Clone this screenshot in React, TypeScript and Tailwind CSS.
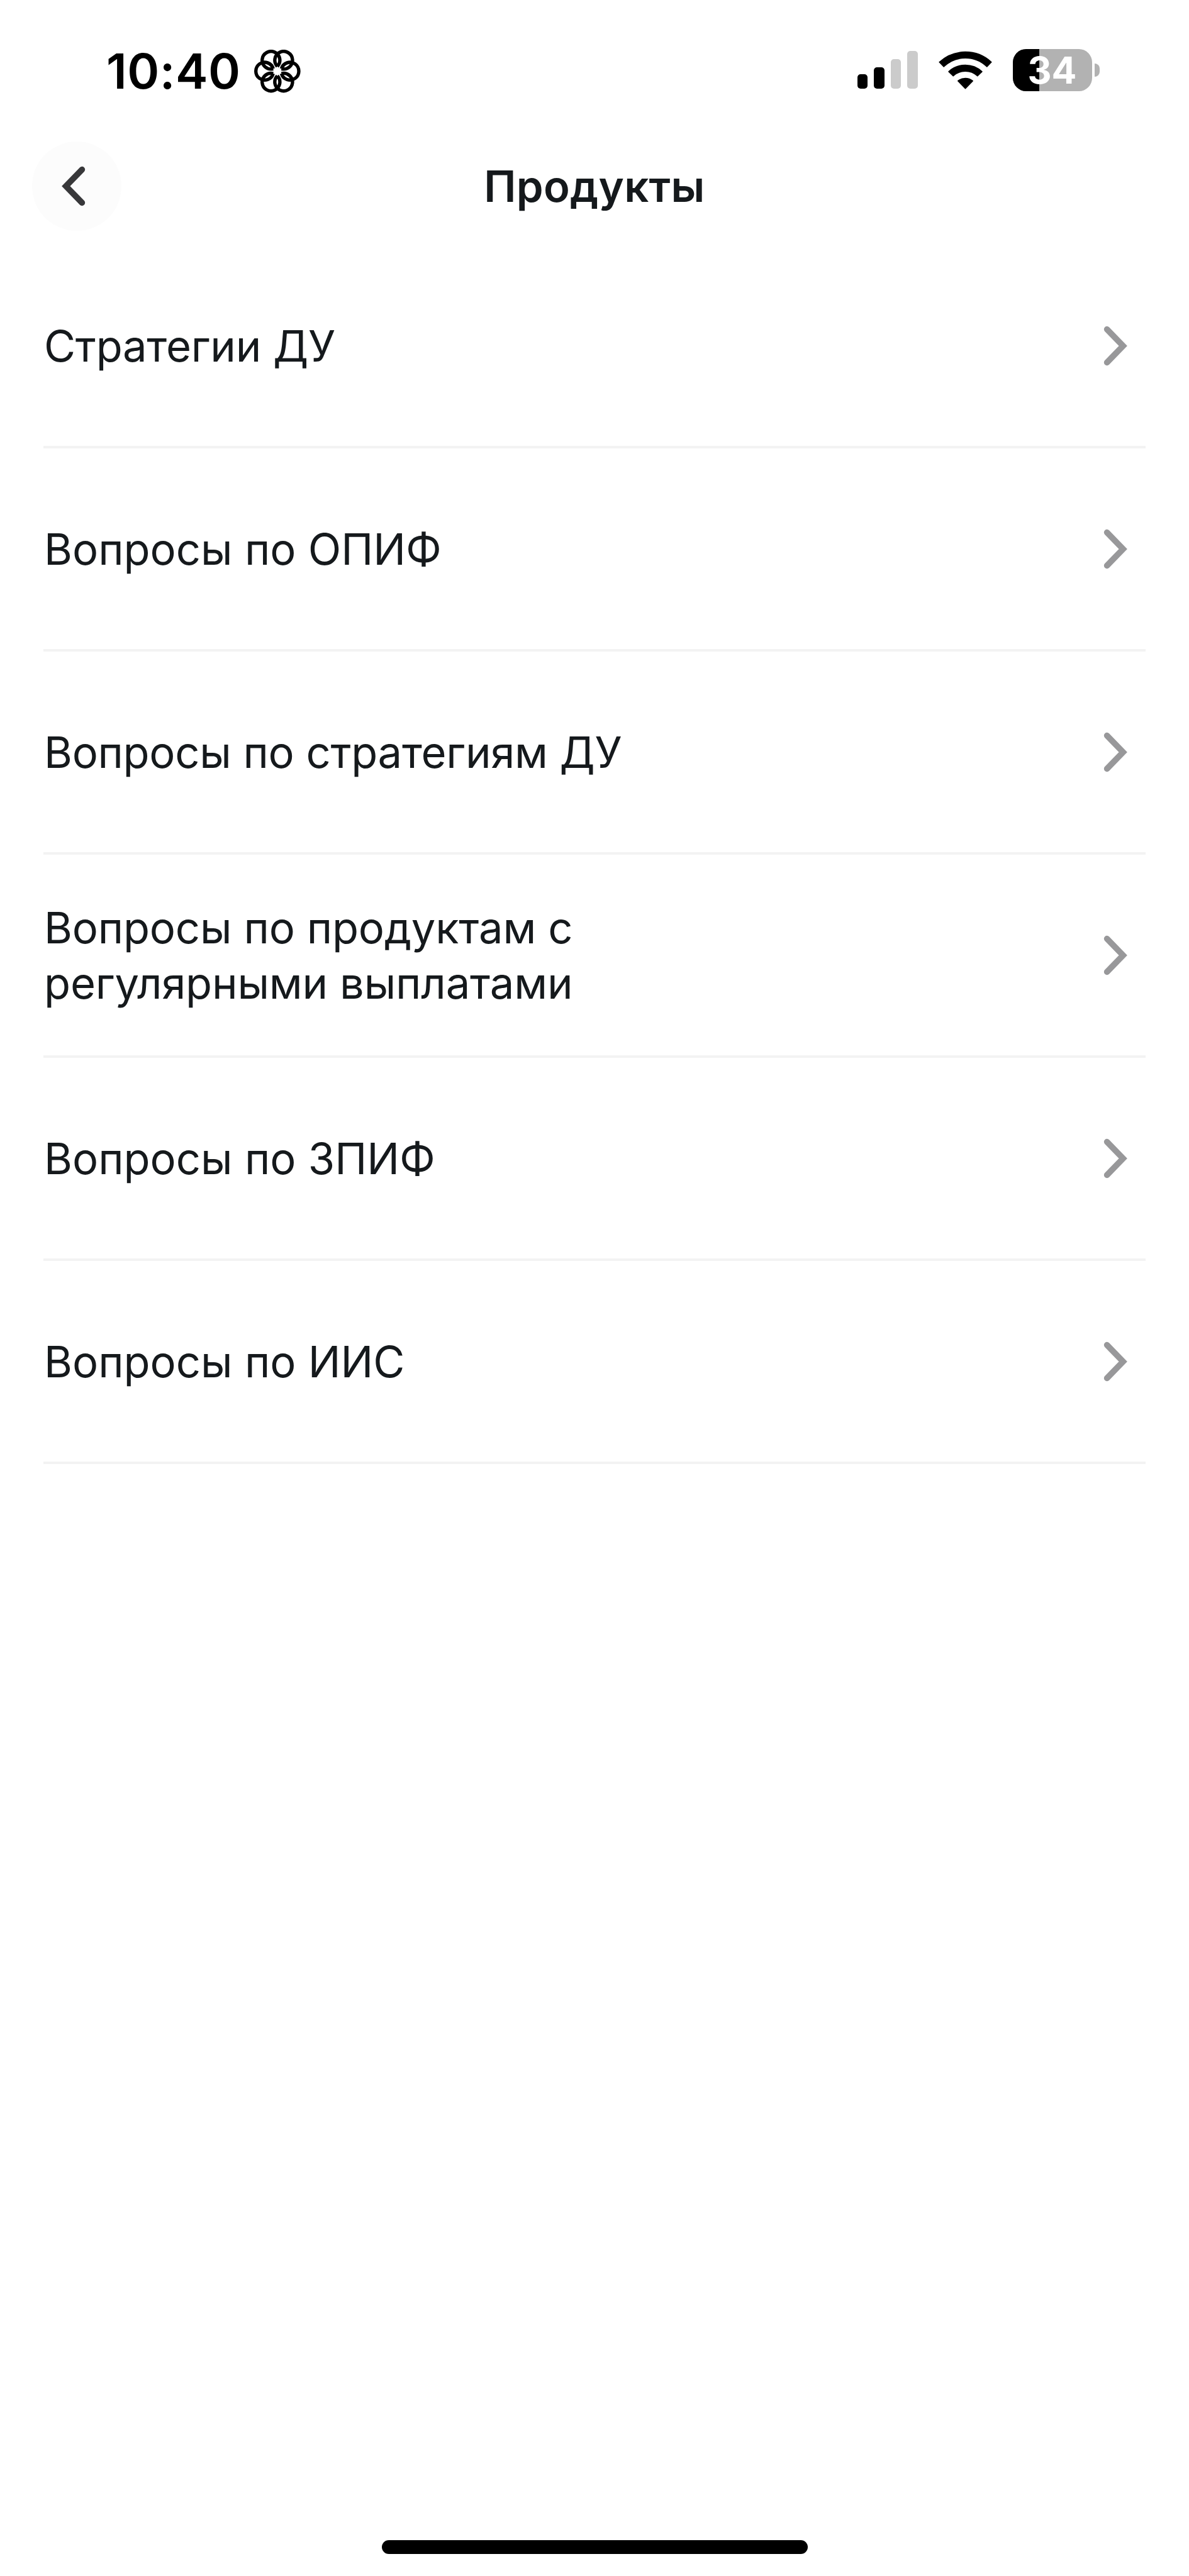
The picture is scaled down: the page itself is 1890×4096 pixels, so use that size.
// ===== Types =====
interface Product {
  id: string;
  title: string;
  tracking?: string;
}

// ===== Data =====
const PRODUCTS: Product[] = [
  { id: "strategies", title: "Стратегии ДУ", tracking: "tracking-[-0.3px]" },
  { id: "opif", title: "Вопросы по ОПИФ" },
  { id: "strategy-questions", title: "Вопросы по стратегиям ДУ", tracking: "tracking-[-0.3px]" },
  {
    id: "regular-payouts",
    title: "Вопросы по продуктам с регулярными выплатами",
    tracking: "tracking-[-0.18px]",
  },
  { id: "zpif", title: "Вопросы по ЗПИФ" },
  { id: "iis", title: "Вопросы по ИИС" },
];

const PETALS = [0, 60, 120, 180, 240, 300];

const BATTERY_LEVEL = 34;

// ===== SVG Icons =====
const IconFlower = ({ className = "" }: { className?: string }) => (
  <svg className={className} viewBox="-137.5 -127.5 275 255" fill="none" stroke="currentColor" strokeWidth="20">
    {PETALS.map((angle) => (
      <path
        key={angle}
        d="M24.5 14.2A52.5 52.5 0 1 0 24.5 -14.2"
        transform={`rotate(${angle})`}
      />
    ))}
  </svg>
);

const IconWifi = ({ className = "" }: { className?: string }) => (
  <svg
    className={className}
    viewBox="0 0 317 231"
    fill="currentColor"
    stroke="currentColor"
    strokeWidth="6"
    strokeLinejoin="round"
  >
    <path d="M4.5 70A227 227 0 0 1 312.5 70L286.5 97A184 184 0 0 0 30.5 97Z" />
    <path d="M60 126A146 146 0 0 1 257 126L230.5 152A105 105 0 0 0 86.5 152Z" />
    <path d="M115 181.5A70 70 0 0 1 202 181.5L158.5 226Z" />
  </svg>
);

const IconChevronLeft = ({ className = "" }: { className?: string }) => (
  <svg className={className} viewBox="0 0 38 64" fill="none" stroke="currentColor" strokeWidth="9.6" strokeLinecap="round">
    <path d="M32.4 5.6L6.8 32L32.4 58.4" />
  </svg>
);

const IconChevronRight = ({ className = "" }: { className?: string }) => (
  <svg className={className} viewBox="0 0 38 64" fill="none" stroke="currentColor" strokeWidth="9.6" strokeLinecap="round">
    <path d="M5.6 5.6L31.2 32L5.6 58.4" />
  </svg>
);

// ===== Components =====

/**
 * Cellular signal - two of four bars active
 */
function SignalBars() {
  return (
    <div className="flex items-end gap-[10.2px] h-[60px]">
      <div className="w-[16.3px] h-[23.5px] rounded-[5px] bg-black" />
      <div className="w-[16.3px] h-[33.8px] rounded-[5px] bg-black" />
      <div className="w-[16.3px] h-[47px] rounded-[5px] bg-[#cbcbcb]" />
      <div className="w-[16.3px] h-[60px] rounded-[5px] bg-[#cbcbcb]" />
    </div>
  );
}

/**
 * Battery - filled part on the left, percentage on top
 */
function Battery({ level }: { level: number }) {
  return (
    <div className="flex items-center gap-[4.5px]">
      <div className="relative w-[126px] h-[67px] rounded-[21px] bg-[#b2b2b2]">
        <div className="h-full rounded-l-[21px] bg-black" style={{ width: `${level}%` }} />
        <span className="absolute inset-0 flex items-center justify-center text-[59px] leading-none font-bold text-white">
          {level}
        </span>
      </div>
      <div className="w-[8px] h-[21px] rounded-r-full bg-[#b2b2b2]" />
    </div>
  );
}

function StatusBar() {
  return (
    <div className="flex items-center justify-between h-[222px] pl-[169px] pr-[142px]">
      <div className="flex items-center pt-[5px] text-black">
        <span className="w-[235px] text-[77.4px] leading-none font-semibold tracking-[0.5px]">10:40</span>
        <IconFlower className="w-[73.7px] h-[68.3px]" />
      </div>
      <div className="flex items-center text-black">
        <SignalBars />
        <IconWifi className="w-[85px] h-[62px] mx-[33px]" />
        <Battery level={BATTERY_LEVEL} />
      </div>
    </div>
  );
}

function Header() {
  return (
    <header className="flex items-center justify-between h-[148px] px-[51px]">
      <button
        className="flex items-center w-[142px] h-[142px] pl-[47px] rounded-full bg-[#fcfcfc] text-[#38383a]"
        aria-label="Назад"
      >
        <IconChevronLeft className="w-[38px] h-[64px]" />
      </button>
      <h1 className="text-[68.7px] leading-none font-semibold tracking-[0.3px] text-[#15191c]">
        Продукты
      </h1>
      <div className="w-[142px]" />
    </header>
  );
}

function ProductRow({ product }: { product: Product }) {
  return (
    <li className="flex items-center justify-between h-[323px] pl-px pr-[29px] border-b-4 border-[#f3f3f3]">
      <span className={`max-w-[1000px] text-[68.7px] leading-[88px] text-[#15191c] ${product.tracking ?? ""}`}>
        {product.title}
      </span>
      <IconChevronRight className="w-[38px] h-[64px] text-[#98989a]" />
    </li>
  );
}

export default function App() {
  return (
    <div className="flex flex-col w-[1890px] h-[4096px] bg-white font-['Inter',sans-serif]">
      <StatusBar />
      <Header />
      <ul className="flex-1 pt-5 px-[69px]">
        {PRODUCTS.map((product) => (
          <ProductRow key={product.id} product={product} />
        ))}
      </ul>
      {/* Home indicator */}
      <div className="flex justify-center pb-[35px]">
        <div className="w-[677px] h-[22px] rounded-full bg-black" />
      </div>
    </div>
  );
}
